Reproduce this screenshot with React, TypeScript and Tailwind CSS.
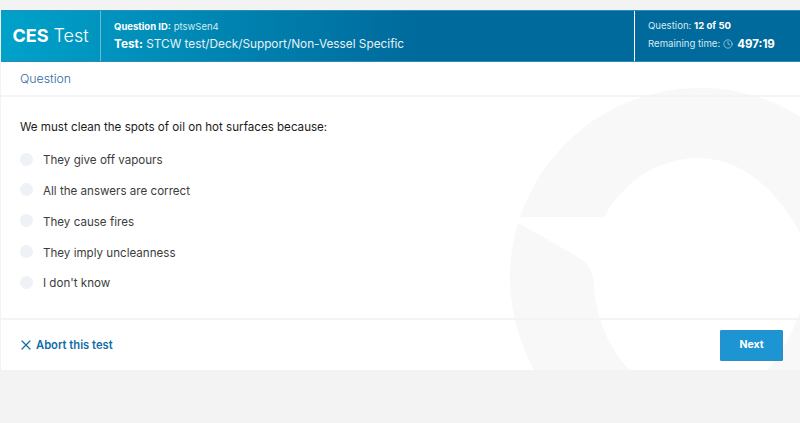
import { Clock, X } from "lucide-react";

const answers = [
	"They give off vapours",
	"All the answers are correct",
	"They cause fires",
	"They imply uncleanness",
	"I don't know",
];

function Watermark() {
	return (
		<svg
			className="absolute left-0 top-0 h-[360px] w-[799px]"
			viewBox="1 10 799 360"
			fill="#f8f8f8"
		>
			<path d="M522 217 L520 217 A190 190 0 0 1 890 277 A190 190 0 1 1 517.5 224 Q519 222 522 225 L578 257 C588 263 594 274 594 285 C596 320 610 350 630 370 L630 375 L767 375 L767 370 C785 350 800 320 808 285 C808 265 805 245 800 233 C778 190 740 158 700 158 C660 158 625 180 606 214 Q605 217 602 217 Z" />
		</svg>
	);
}

export default function App() {
	return (
		<div className="h-[423px] w-full overflow-hidden bg-[#f3f3f3] pl-px pt-2.5 font-['Inter',sans-serif]">
			<div className="relative h-[360px] overflow-hidden bg-white">
				<Watermark />
				<div className="relative flex h-full flex-col">
					<header className="flex h-[52px] border-y border-[#2b8db5] bg-[linear-gradient(90deg,#00a2ca_0%,#006a9c_52%,#006a9c_100%)] text-white">
						<div className="flex w-[100px] items-center justify-center border-r border-[#6fb9d4] text-[18px] leading-none">
							<span className="font-bold">CES</span>
							<span className="ml-[5px] font-light">Test</span>
						</div>
						<div className="flex flex-1 flex-col justify-center pl-[13px]">
							<div className="text-[9.5px] leading-[14px] text-[#d5e9f2]">
								<b className="font-bold text-white">Question ID:</b> ptswSen4
							</div>
							<div className="mt-[2px] text-[11.8px] leading-[16px] text-[#e6f2f7]">
								<b className="font-bold text-white">Test:</b> STCW test/Deck/Support/Non-Vessel Specific
							</div>
						</div>
						<div className="flex w-[166px] flex-col justify-center border-l border-white pl-[13px] text-[9.6px] text-[#d5e9f2]">
							<div className="leading-[14px]">
								Question: <b className="font-bold text-white">12 of 50</b>
							</div>
							<div className="mt-[2px] flex items-center leading-[18px]">
								Remaining time:
								<Clock className="ml-[3px] mr-[4px] size-[10px]" strokeWidth={1.5} />
								<b className="text-[11.5px] font-bold text-white">497:19</b>
							</div>
						</div>
					</header>
					<div className="flex h-[35px] items-center border-b-2 border-[#f2f4f8] pl-[19px] pt-[2px] text-[12.3px] font-light text-[#2f6aa3]">
						Question
					</div>
					<main className="flex-1 pl-[19px] pt-[22px]">
						<p className="text-[11.6px] leading-4 text-[#1c1c1c]">
							We must clean the spots of oil on hot surfaces because:
						</p>
						<ul className="mt-[18px] flex flex-col gap-[14.75px]">
							{answers.map((answer) => (
								<li key={answer} className="flex h-4 items-center text-[11.6px] text-[#3d3d3d]">
									<span className="mb-[4px] size-[13px] rounded-full bg-[#eef1f5]" />
									<span className="ml-[10px]">{answer}</span>
								</li>
							))}
						</ul>
					</main>
					<footer className="flex h-[52px] items-center justify-between border-t-2 border-[#f2f4f8] pl-[17px] pr-[17px]">
						<a className="flex items-center text-[11.2px] font-semibold text-[#0f6ea5]">
							<X className="mr-[2px] size-[16px]" strokeWidth={1.8} />
							Abort this test
						</a>
						<button className="h-[31px] w-[63px] rounded-[1px] border border-[#2a8fc8] bg-[#1d95d2] text-[10.5px] font-bold text-white">
							Next
						</button>
					</footer>
				</div>
			</div>
		</div>
	);
}
